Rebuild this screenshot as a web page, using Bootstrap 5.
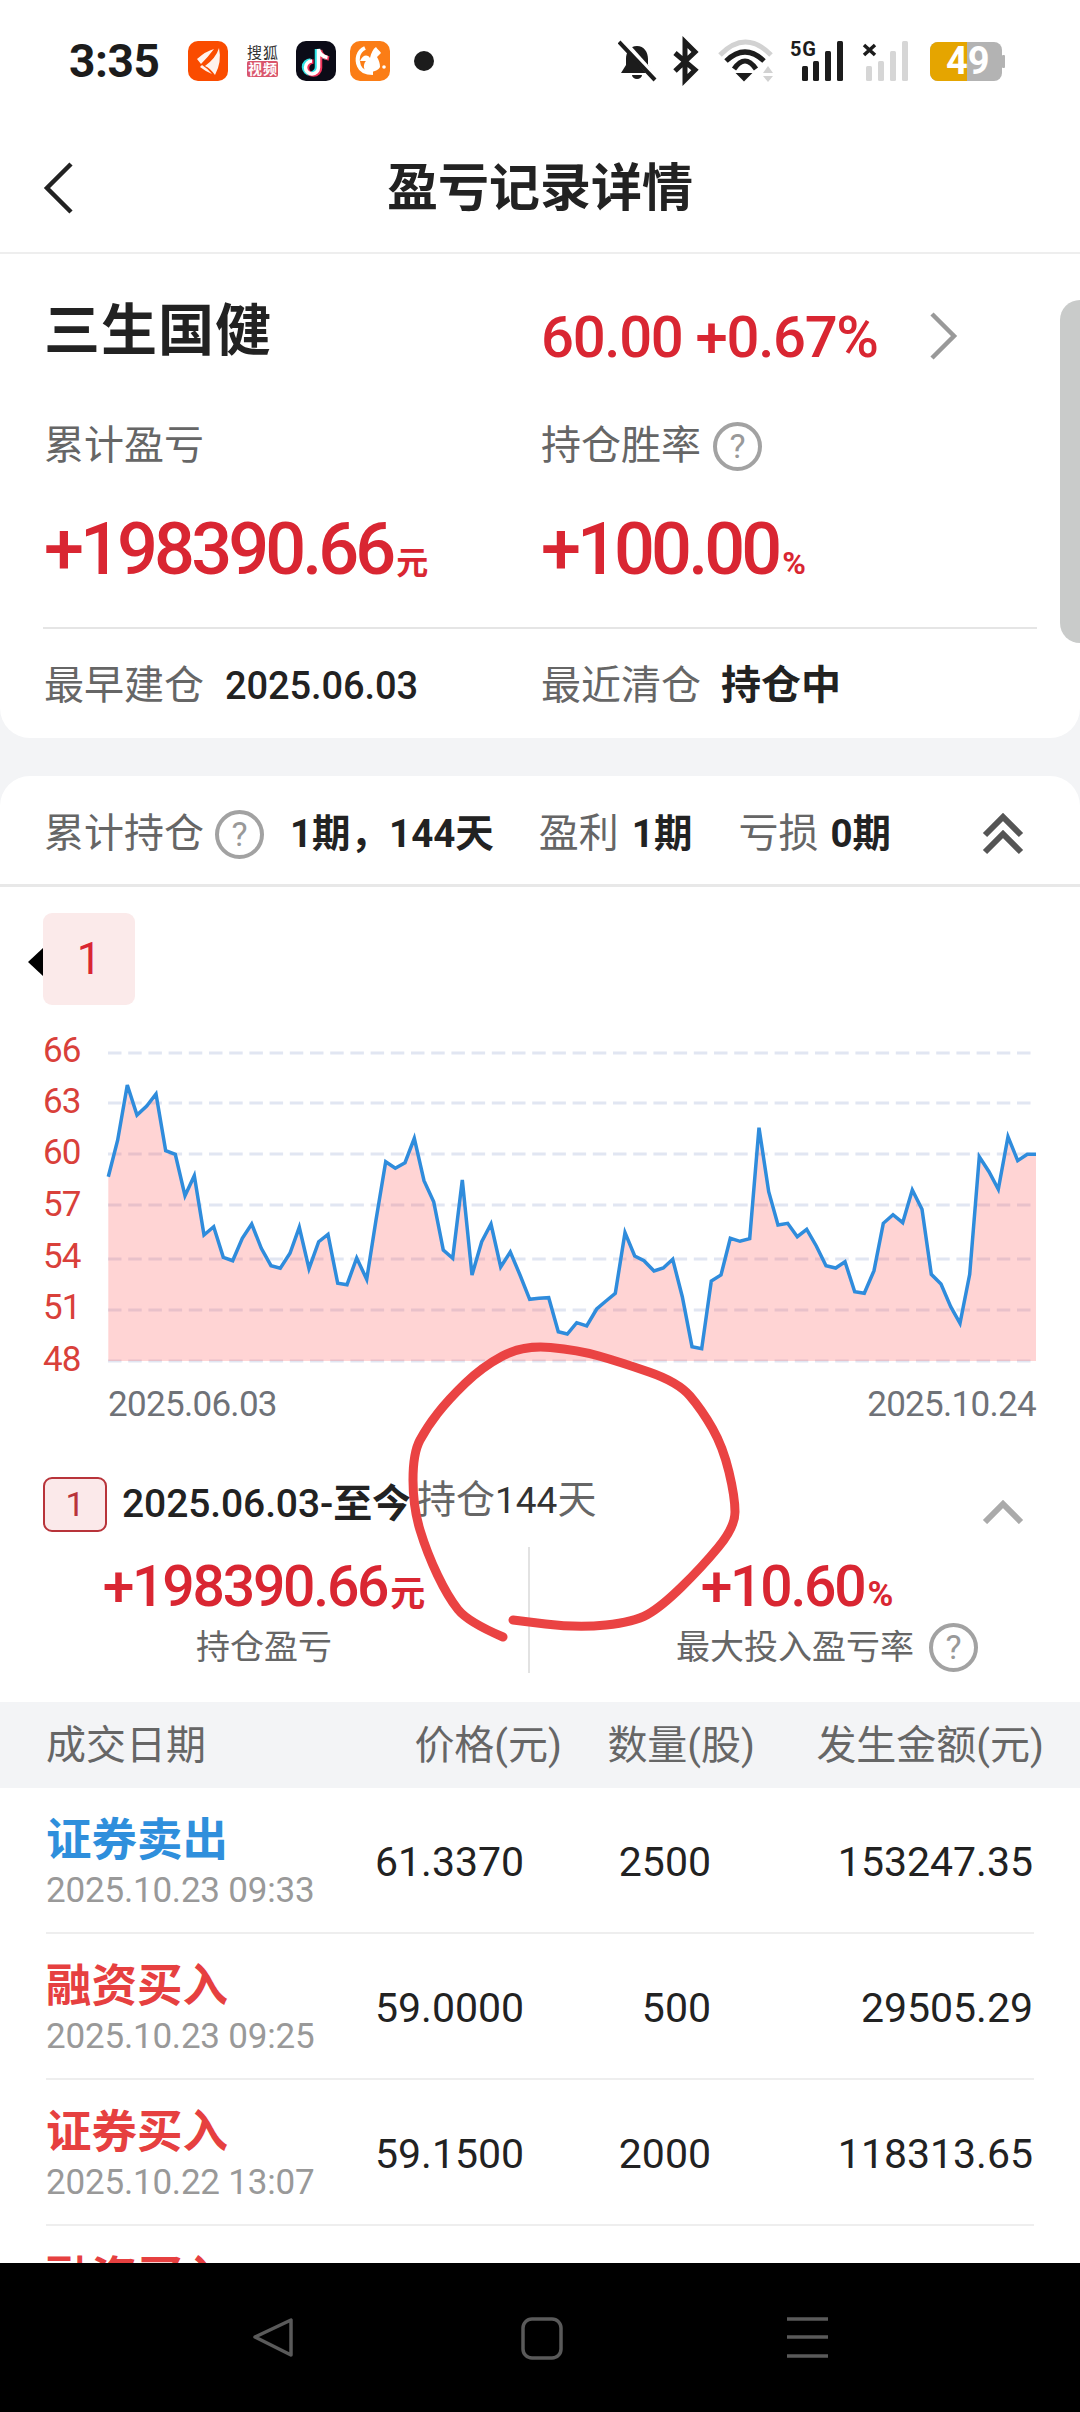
<!DOCTYPE html>
<html lang="zh-CN">
<head>
    <meta charset="UTF-8">
    <meta name="viewport" content="width=device-width, initial-scale=1.0">
    <title>盈亏记录详情</title>
    <link href="https://cdn.jsdelivr.net/npm/bootstrap@5.3.0/dist/css/bootstrap.min.css" rel="stylesheet">
    <style>
        html, body { height: 2412px; overflow: hidden; }
        body {
            background-color: #f3f4f6;
            font-family: Roboto, "Noto Sans CJK SC", sans-serif;
            color: #222;
            position: relative;
        }
        .top-area { background: #fff; }
        .status-bar { height: 122px; padding-left: 69px; }
        .clock { font-size: 46px; font-weight: 700; width: 119px; color: #1c1c1c; line-height: 1; letter-spacing: -.4px; }
        .app-head { height: 132px; border-bottom: 2px solid #eee; position: relative; }
        .app-head h1 { font-size: 51px; font-weight: 700; margin: 4px 0 0; }
        .head-back { position: absolute; left: 42px; top: 39px; }

        .summary-card { height: 484px; background: #fff; border-radius: 0 0 30px 30px; }
        .sum-row { padding-left: 44px; }
        .half-col { width: 497px; flex-shrink: 0; }
        .rh-a { height: 158px; }
        .rh-b { height: 66px; padding-top: 2px; }
        .rh-c { height: 142px; }
        .rh-d { height: 104px; margin-top: 5px; }
        .stock-name { font-size: 56px; font-weight: 700; letter-spacing: 1px; margin-top: -5px; }
        .stock-price { font-size: 58px; font-weight: 500; color: #d92632; letter-spacing: -1.3px; line-height: 1; margin-top: 8px; }
        .more-arrow { margin-left: 50px; margin-top: 6px; }
        .muted-label { font-size: 40px; color: #666; white-space: nowrap; }
        .ask-icon {
            width: 49px; height: 49px; border: 4px solid #a2a2a2; border-radius: 50%;
            color: #999; font-size: 34px; line-height: 1; flex-shrink: 0;
        }
        .big-num { font-size: 72px; font-weight: 500; color: #d92632; letter-spacing: -3.9px; line-height: 1; margin-top: 2px; }
        .unit-sm { font-size: 32px; font-weight: 700; letter-spacing: 0; margin-left: 4px; }
        .sum-line { height: 2px; background: #e5e5e5; margin: 7px 43px 0; }
        .plain-val { font-size: 38px; color: #222; font-weight: 500; letter-spacing: -.1px; margin-left: 21px; }
        .bold-val { font-size: 40px; font-weight: 700; margin-left: 20px; }

        .scroll-thumb {
            position: absolute; right: 0; top: 300px; width: 20px; height: 343px;
            background: #c9cbca; border-radius: 20px 0 0 20px;
        }

        .detail-card { margin-top: 38px; background: #fff; border-radius: 30px 30px 0 0; height: 926px; }
        .hold-head { height: 111px; border-bottom: 3px solid #e8e8e8; padding: 8px 0 0 44px; position: relative; }
        .hold-strong { font-size: 38.5px; font-weight: 700; white-space: nowrap; }
        .hold-label { font-size: 40px; color: #666; white-space: nowrap; }
        .chev-double { position: absolute; left: 982px; top: 37px; }
        .period-tab {
            width: 92px; height: 92px; margin: 26px 0 0 43px; border-radius: 9px; background: #fbeaea;
            color: #d92632; font-size: 44px; position: relative;
        }
        .period-tab::before {
            content: ""; position: absolute; left: -15px; top: 35px;
            border-style: solid; border-width: 14px 15px 14px 0; border-color: transparent #000 transparent transparent;
        }
        .chart-box { display: block; margin-top: 25px; }
        .period-row { height: 55px; margin-top: 47px; padding-left: 43px; position: relative; }
        .period-num {
            width: 64px; height: 55px; border: 2px solid #b8343a; border-radius: 9px; background: #fbe9ea;
            color: #b8343a; font-size: 34px; flex-shrink: 0;
        }
        .period-date { font-size: 39px; font-weight: 500; margin-left: 15px; letter-spacing: -.1px; white-space: nowrap; }
        .period-date b { font-weight: 700; }
        .period-days { font-size: 39px; color: #666; margin: -9px 0 0 6px; white-space: nowrap; }
        .period-days em { font-style: normal; color: #333; font-size: 37px; }
        .chev-one { position: absolute; left: 982px; top: 23px; }
        .stat-wrap { margin-top: 15px; height: 126px; }
        .stat-left { width: 530px; height: 126px; border-right: 2px solid #e2e2e2; padding-top: 10px; }
        .stat-right { flex: 1; height: 126px; padding-top: 10px; }
        .stat-num { font-size: 57px; font-weight: 500; color: #d92632; letter-spacing: -2.2px; line-height: 60px; height: 60px; white-space: nowrap; }
        .stat-num .unit-sm { margin-left: 3px; font-size: 35px; }
        .stat-label { font-size: 34px; color: #666; line-height: 60px; white-space: nowrap; }

        .trade-head { height: 86px; background: #f3f4f6; color: #666; font-size: 40px; padding-left: 46px; padding-top: 2px; }
        .th-name { width: 354px; }
        .th-price { width: 162px; }
        .th-qty { width: 193px; }
        .th-sum { width: 289px; }
        .trade-list { background: #fff; height: 700px; padding: 0 46px; }
        .trade-item { height: 146px; border-bottom: 2px solid #eee; }
        .td-name { width: 329px; flex-shrink: 0; }
        .trade-type { font-size: 45.5px; font-weight: 700; line-height: 54px; margin-top: 8px; }
        .trade-time { font-size: 35px; color: #999; line-height: 46px; letter-spacing: -.2px; white-space: nowrap; }
        .c-blue { color: #2f8fdc; }
        .c-red { color: #e64040; }
        .td-val { font-size: 41px; font-weight: 400; text-align: right; color: #222; line-height: 1; margin-top: 4px; }
        .td-price { width: 145px; }
        .td-qty { width: 191px; }
        .td-sum { width: 322px; }

        .mark-layer { position: absolute; left: 0; top: 0; pointer-events: none; }
        .sys-nav { position: absolute; left: 0; right: 0; bottom: 0; height: 149px; background: #000; }
    </style>
</head>
<body>
    <div class="top-area">
        <div class="status-bar d-flex align-items-center">
            <div class="clock">3:35</div>
            <svg width="246" height="52" viewBox="188 36 246 52">
                <rect x="188" y="42" width="40" height="40" rx="10" fill="#fa4c00"/>
                <path d="M197 60Q206 52 214 50Q208 58 201 65Z M219 49Q216 59 205 67Q210 69 215 76Q222 63 219 49Z M202 66Q207 69 212 75Q205 72 200 68Z" fill="#fff" opacity=".93"/>
                <text x="247" y="59" font-size="15" fill="#333" font-family="Noto Sans CJK SC" textLength="31">搜狐</text>
                <rect x="247" y="62" width="31" height="16" rx="2" fill="#d9566c"/>
                <text x="248" y="75" font-size="14" font-weight="700" fill="#fff" font-family="Noto Sans CJK SC" textLength="29">视频</text>
                <rect x="296" y="42" width="40" height="40" rx="10" fill="#0b0b17"/>
                <path d="M317 50V68a6.5 6.5 0 1 1-6.500-6.500M317 50q1 7 9 8.500" fill="none" stroke="#2de3e6" stroke-width="4.500"/>
                <path d="M320 51V69a6.500 6.500 0 1 1-6.500-6.500M320 51q1 7 9 8.500" fill="none" stroke="#f0335a" stroke-width="4.500"/>
                <path d="M318.500 50V68.500a6.500 6.500 0 1 1-6.500-6.500M318.500 50q1 7 9 8.500" fill="none" stroke="#fff" stroke-width="3.500"/>
                <rect x="350" y="42" width="40" height="40" rx="10" fill="#fb7d16"/>
                <path d="M365 49c-7 3-9 11-6 18 2 5 8 7 14 7" fill="none" stroke="#fff" stroke-width="4"/>
                <path d="M360 62c3-6 7-7 10-3 1-5 3-9 6-11 1 2 4 4 5 6l-4 4c2 3 3 7 3 10-2 5-12 6-15 3-2-3-1-7 1-9z" fill="#fff"/>
                <circle cx="384" cy="68" r="1.800" fill="#fff"/>
                <circle cx="424" cy="62" r="10" fill="#1c1c1c"/>
            </svg>
            <svg class="ms-auto" style="margin-right:70px" width="392" height="52" viewBox="618 36 392 52">
                <path d="M637 47c-7 0-11 6-11 13v6l-5 8h32l-5-8v-6c0-7-4-13-11-13z" fill="#1c1c1c"/>
                <path d="M632 76h10a5 4 0 0 1-10 0z" fill="#1c1c1c"/>
                <path d="M622 42L656 80" stroke="#fff" stroke-width="7"/>
                <path d="M619 43L655 81" stroke="#1c1c1c" stroke-width="4"/>
                <path d="M675 54L695 71L685 81V43L695 53L675 72" fill="none" stroke="#1c1c1c" stroke-width="5"/>
                <path d="M720 56Q745.500 30 771 56" fill="none" stroke="#d2d2d2" stroke-width="5"/>
                <path d="M726 62Q745 44 764 62M734 70Q745 54 756 70" fill="none" stroke="#1c1c1c" stroke-width="5"/>
                <path d="M738 75H750L744 81Z" fill="#1c1c1c" stroke="#1c1c1c" stroke-width="2"/>
                <path d="M763 74H773L768 67ZM763 77H773L768 83Z" fill="#d2d2d2"/>
                <text x="790" y="57" font-size="20" font-weight="700" fill="#1c1c1c" font-family="Roboto" textLength="26">5G</text>
                <g fill="#1c1c1c"><rect x="802" y="67" width="6" height="15" rx="1.500"/><rect x="813" y="62" width="6" height="20" rx="1.500"/><rect x="825" y="52" width="6" height="30" rx="1.500"/><rect x="837" y="42" width="6" height="40" rx="1.500"/></g>
                <path d="M864 46L875 56M875 46L864 56" stroke="#1c1c1c" stroke-width="3.500"/>
                <g fill="#d6d6d6"><rect x="866" y="67" width="6" height="15" rx="1.500"/><rect x="878" y="62" width="6" height="20" rx="1.500"/><rect x="890" y="52" width="6" height="30" rx="1.500"/><rect x="902" y="42" width="6" height="40" rx="1.500"/></g>
                <rect x="930" y="43" width="72" height="39" rx="8" fill="#b3b3b3"/>
                <path d="M938 43H967V82H938a8 8 0 0 1-8-8V51a8 8 0 0 1 8-8z" fill="#e5a500"/>
                <rect x="1002" y="56" width="3" height="13" rx="1" fill="#b3b3b3"/>
                <text x="946" y="75" font-size="38" font-weight="700" fill="#fff" font-family="Roboto">49</text>
            </svg>
        </div>
        <div class="app-head d-flex align-items-center justify-content-center">
            <svg class="head-back" width="32" height="54" viewBox="0 0 32 54"><path d="M29 3L5 27L29 51" fill="none" stroke="#222" stroke-width="4.500"/></svg>
            <h1>盈亏记录详情</h1>
        </div>
    </div>

    <div class="summary-card">
        <div class="sum-row d-flex align-items-center rh-a">
            <div class="half-col stock-name">三生国健</div>
            <div class="stock-price">60.00 +0.67%</div>
            <svg class="more-arrow" width="30" height="48" viewBox="0 0 30 48"><path d="M4 2L26 24L4 46" fill="none" stroke="#999" stroke-width="4.500"/></svg>
        </div>
        <div class="sum-row d-flex align-items-center rh-b">
            <div class="half-col muted-label">累计盈亏</div>
            <div class="muted-label">持仓胜率</div>
            <span class="ask-icon d-flex align-items-center justify-content-center" style="margin-left:12px">?</span>
        </div>
        <div class="sum-row d-flex align-items-center rh-c">
            <div class="half-col big-num">+198390.66<span class="unit-sm">元</span></div>
            <div class="big-num">+100.00<span class="unit-sm">%</span></div>
        </div>
        <div class="sum-line"></div>
        <div class="sum-row d-flex align-items-center rh-d">
            <div class="half-col d-flex align-items-center"><span class="muted-label">最早建仓</span><span class="plain-val">2025.06.03</span></div>
            <div class="d-flex align-items-center"><span class="muted-label">最近清仓</span><span class="bold-val">持仓中</span></div>
        </div>
    </div>

    <div class="detail-card">
        <div class="hold-head d-flex align-items-center">
            <span class="hold-label">累计持仓</span>
            <span class="ask-icon d-flex align-items-center justify-content-center" style="margin-left:11px">?</span>
            <span class="hold-strong" style="margin-left:26px">1期，144天</span>
            <span class="hold-label" style="margin-left:45px">盈利</span>
            <span class="hold-strong" style="margin-left:13px">1期</span>
            <span class="hold-label" style="margin-left:46px">亏损</span>
            <span class="hold-strong" style="margin-left:12px">0期</span>
            <svg class="chev-double" width="42" height="42" viewBox="0 0 42 42"><path d="M3 22L21 4L39 22M3 39L21 21L39 39" fill="none" stroke="#555" stroke-width="6"/></svg>
        </div>
        <div class="period-tab d-flex align-items-center justify-content-center">1</div>

        <svg class="chart-box" id="priceChart" width="1080" height="400" viewBox="0 1030 1080 400" font-family="Roboto">
            <g font-size="35" fill="#d9403a" letter-spacing="-1">
                <text x="43" y="1062">66</text><text x="43" y="1113">63</text><text x="43" y="1164">60</text>
                <text x="43" y="1216">57</text><text x="43" y="1268">54</text><text x="43" y="1319">51</text><text x="43" y="1371">48</text>
            </g>
            <g stroke="#e1e6f2" stroke-width="3" stroke-dasharray="13.500 6.700">
                <path d="M108 1053H1033M108 1103H1033M108 1154H1033M108 1205H1033M108 1259H1033M108 1310H1033M108 1361H1033"/>
            </g>
            <polygon id="priceArea" fill="#ff5a5a" fill-opacity=".26"/>
            <polyline id="priceLine" fill="none" stroke="#2f8cdc" stroke-width="3.500"/>
            <g font-size="35" fill="#6f7278" letter-spacing="-.7">
                <text x="108" y="1416">2025.06.03</text><text x="1036" y="1416" text-anchor="end">2025.10.24</text>
            </g>
        </svg>

        <div class="period-row d-flex align-items-center">
            <span class="period-num d-flex align-items-center justify-content-center">1</span>
            <span class="period-date">2025.06.03-<b>至今</b></span>
            <span class="period-days">持仓<em>144</em>天</span>
            <svg class="chev-one" width="42" height="24" viewBox="0 0 42 24"><path d="M3 22L21 4L39 22" fill="none" stroke="#aaa" stroke-width="6"/></svg>
        </div>
        <div class="stat-wrap d-flex">
            <div class="stat-left text-center">
                <div class="stat-num">+198390.66<span class="unit-sm">元</span></div>
                <div class="stat-label">持仓盈亏</div>
            </div>
            <div class="stat-right">
                <div class="stat-num text-center" style="padding-right:16px">+10.60<span class="unit-sm">%</span></div>
                <div class="stat-label d-flex align-items-center" style="padding-left:146px"><span>最大投入盈亏率</span><span class="ask-icon d-flex align-items-center justify-content-center" style="margin-left:15px">?</span></div>
            </div>
        </div>
    </div>

    <div class="trade-head d-flex align-items-center">
        <div class="th-name">成交日期</div>
        <div class="th-price text-end">价格(元)</div>
        <div class="th-qty text-end">数量(股)</div>
        <div class="th-sum text-end">发生金额(元)</div>
    </div>
    <div class="trade-list">
        <div class="trade-item d-flex align-items-center">
            <div class="td-name"><div class="trade-type c-blue">证券卖出</div><div class="trade-time">2025.10.23 09:33</div></div>
            <div class="td-val td-price">61.3370</div><div class="td-val td-qty">2500</div><div class="td-val td-sum">153247.35</div>
        </div>
        <div class="trade-item d-flex align-items-center">
            <div class="td-name"><div class="trade-type c-red">融资买入</div><div class="trade-time">2025.10.23 09:25</div></div>
            <div class="td-val td-price">59.0000</div><div class="td-val td-qty">500</div><div class="td-val td-sum">29505.29</div>
        </div>
        <div class="trade-item d-flex align-items-center">
            <div class="td-name"><div class="trade-type c-red">证券买入</div><div class="trade-time">2025.10.22 13:07</div></div>
            <div class="td-val td-price">59.1500</div><div class="td-val td-qty">2000</div><div class="td-val td-sum">118313.65</div>
        </div>
        <div class="trade-item d-flex align-items-center">
            <div class="td-name"><div class="trade-type c-red">融资买入</div><div class="trade-time">&nbsp;</div></div>
        </div>
    </div>

    <div class="scroll-thumb"></div>

    <!-- hand drawn ring on top of the screenshot -->
    <svg class="mark-layer" width="1080" height="2412" viewBox="0 0 1080 2412">
        <path id="ringMark" fill="none" stroke="#ea4343" stroke-width="9" stroke-linecap="round" stroke-linejoin="round"/>
    </svg>

    <div class="sys-nav">
        <svg width="1080" height="149" viewBox="0 2263 1080 149">
            <path d="M291 2320V2355L255 2337Z" fill="none" stroke="#5a5a5a" stroke-width="3.500" stroke-linejoin="round"/>
            <rect x="523" y="2319" width="38" height="39" rx="9" fill="none" stroke="#5a5a5a" stroke-width="3.500"/>
            <path d="M787 2319H828M787 2337H828M787 2356H828" stroke="#5a5a5a" stroke-width="3.500"/>
        </svg>
    </div>

    <script>
        // Chart points read off the picture, as [x, y] pixels inside the chart area
        const raw = [55,470,83,360,112,195,141,285,170,258,198,222,227,392,256,403,285,527,313,467,342,645,371,620,400,712,428,722,457,655,485,612,514,685,543,737,571,745,600,700,628,622,657,746,686,665,714,643,743,790,771,794,800,714,830,778,858,600,887,425,916,445,945,428,973,355,1002,482,1031,545,1060,690,1088,715,1117,480,1146,765,1175,665,1203,612,1232,741,1261,696,1290,765,1319,838,1347,835,1376,833,1405,935];
        const raw2 = [22,942,50,908,80,918,110,867,138,843,166,820,195,638,224,708,252,722,282,753,310,744,338,718,367,830,396,980,425,986,454,783,483,765,511,655,540,664,569,656,597,323,626,515,654,615,683,610,712,650,740,628,769,678,798,737,827,744,855,725,884,815,913,820,942,752,970,610,999,584,1028,608,1057,510,1086,568,1114,763,1143,792,1172,860,1200,910,1229,763,1258,410,1287,455,1315,508,1344,350,1373,422,1402,403,1428,403];
        const pts = [];
        for (let i = 0; i < raw.length; i += 2) pts.push((90 + raw[i] / 3).toFixed(1) + ',' + (1020 + raw[i + 1] / 3).toFixed(1));
        for (let i = 0; i < raw2.length; i += 2) pts.push((560 + raw2[i] / 3).toFixed(1) + ',' + (1020 + raw2[i + 1] / 3).toFixed(1));
        document.getElementById('priceLine').setAttribute('points', pts.join(' '));
        document.getElementById('priceArea').setAttribute('points', '108.3,1361 ' + pts.join(' ') + ' 1036,1361');

        // Ring: smooth curve through points read off the picture
        const ring = [[503,1637],[468,1622],[448,1597],[427,1553],[413,1507],[413,1453],[427,1427],[448,1400],[482,1367],[523,1345],[578,1350],[620,1362],[678,1382],[702,1410],[723,1447],[735,1497],[735,1527],[702,1567],[661,1607],[634,1622],[578,1628],[513,1620]];
        let d = 'M' + ring[0].join(' ');
        for (let i = 1; i < ring.length - 1; i++) {
            const mx = (ring[i][0] + ring[i + 1][0]) / 2, my = (ring[i][1] + ring[i + 1][1]) / 2;
            d += ' Q' + ring[i].join(' ') + ' ' + mx + ' ' + my;
        }
        d += ' L' + ring[ring.length - 1].join(' ');
        document.getElementById('ringMark').setAttribute('d', d);
    </script>
    <script src="https://cdn.jsdelivr.net/npm/bootstrap@5.3.0/dist/js/bootstrap.bundle.min.js"></script>
</body>
</html>
